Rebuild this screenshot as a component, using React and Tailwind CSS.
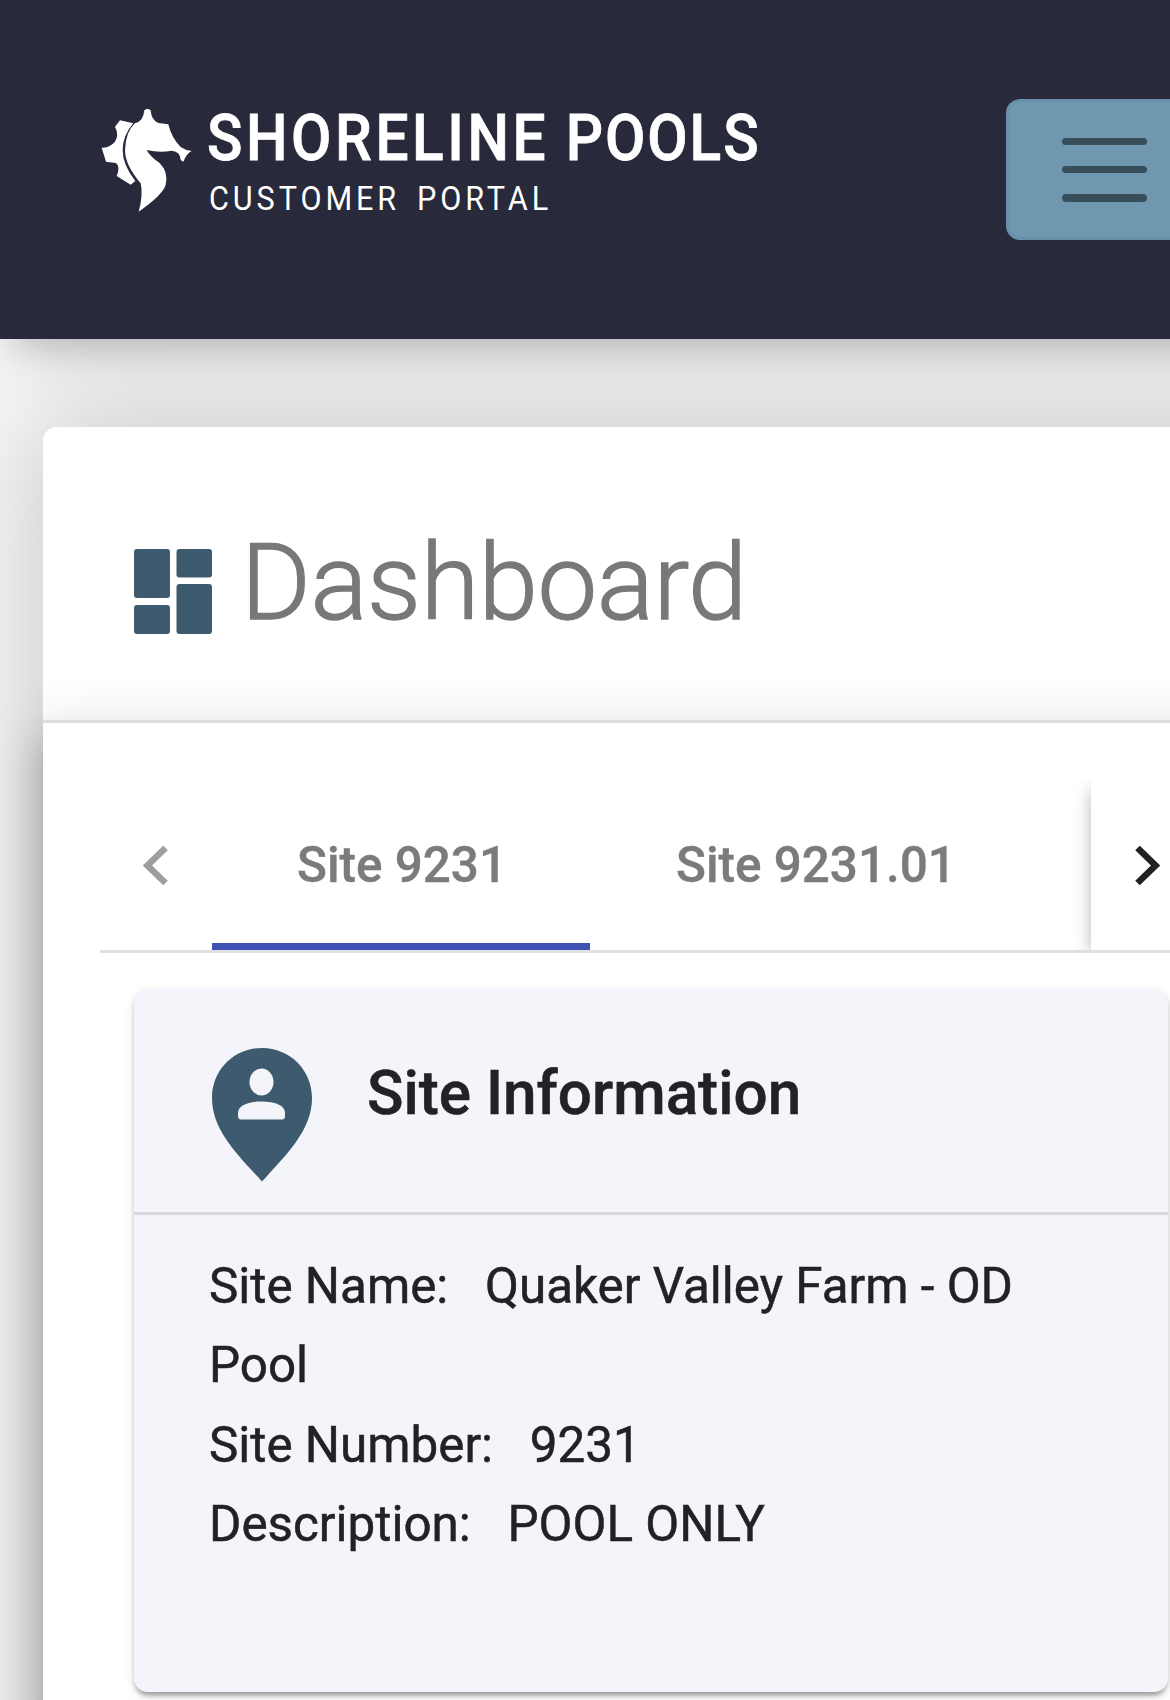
import React from "react";

function Seahorse() {
  return (
    <svg viewBox="0 0 360 390" className="h-[130px] w-[120px] shrink-0" fill="#fff">
      <path d="M130 85L90 76L75 95Q88 120 75 140Q60 158 35 158L48 200L78 204Q92 215 80 243L122 269L136 258Q98 210 98 165Q99 120 130 85Z" />
      <path d="M163 46Q172 38 182 46Q184 76 205 84L235 88Q245 130 272 156Q286 166 305 168Q290 175 280 200L272 195Q272 170 245 167Q210 174 170 165Q180 185 208 203Q236 230 227 270Q218 300 146 350Q160 300 152 265Q105 210 105 165Q107 110 135 85Q160 80 163 46Z" />
    </svg>
  );
}

export default function App() {
  return (
    <div className="h-[1700px] w-[1170px] overflow-hidden bg-[#f5f5f5] font-['Roboto',sans-serif]">
      <header className="flex h-[339px] w-[1300px] bg-[#28293b] shadow-[0_22px_32px_-14px_rgba(0,0,0,0.18),0_40px_70px_-20px_rgba(0,0,0,0.1)]">
        <div className="flex w-[1006px] shrink-0 pt-[95px] pl-[90px]">
          <Seahorse />
          <div className="-ml-[3.5px] flex flex-col pt-[13px] whitespace-nowrap text-white">
            <span className="h-[70px] origin-left scale-x-90 text-[65px] leading-[60px] font-medium tracking-[4px] [-webkit-text-stroke:0.800px_#fff]">
              SHORELINE<span className="tracking-[2.200px]"> POOLS</span>
            </span>
            <span className="ml-[2px] origin-left scale-x-90 text-[34px] leading-[40px] tracking-[4.350px] [word-spacing:6px]">CUSTOMER PORTAL</span>
          </div>
        </div>
        <button className="mt-[99px] flex h-[141px] w-[220px] shrink-0 flex-col gap-[20.800px] rounded-[14px] border-[3px] border-[#6990a9] bg-[#6f97b0] pt-[35.500px] pl-[53px]">
          <span className="h-[7.5px] w-[85px] rounded-full bg-[#384f5a]" />
          <span className="h-[7.5px] w-[85px] rounded-full bg-[#384f5a]" />
          <span className="h-[7.5px] w-[85px] rounded-full bg-[#384f5a]" />
        </button>
      </header>

      <main className="mt-[88px] ml-[43px] w-[1300px] rounded-tl-[14px] bg-white shadow-[0_0_110px_rgba(0,0,0,0.2)]">
        <div className="flex h-[293px] items-start pl-[91px]">
          <svg viewBox="0 0 78 85" className="mt-[122px] h-[85px] w-[78px]" fill="#3d5a6e">
            <rect width="36" height="49" rx="3" />
            <rect y="56" width="36" height="29" rx="3" />
            <rect x="42.500" width="35.500" height="28.500" rx="3" />
            <rect x="42.500" y="35" width="35.500" height="50" rx="3" />
          </svg>
          <h1 className="mt-[96px] ml-[29px] text-[106.5px] leading-[120px] font-light tracking-[-0.400px] text-[#787878] [-webkit-text-stroke:1.4px_#787878]">Dashboard</h1>
        </div>

        <section className="h-[1100px] border-t-[3px] border-[#dedede] bg-white pt-[58px] pl-[57px] shadow-[0_18px_18px_-11px_rgba(0,0,0,0.2),0_28px_35px_4px_rgba(0,0,0,0.14),0_11px_49px_7px_rgba(0,0,0,0.12)]">
          <nav className="flex h-[172px] overflow-hidden border-b-[3px] border-[#e0e0e0] text-[49.4px] font-medium text-[#7b7b7b] [-webkit-text-stroke:0.400px_#7b7b7b]">
            <div className="flex w-[112px] shrink-0 items-center pl-[43px]">
              <svg viewBox="0 0 25 40" className="h-[40px] w-[25px]" fill="none" stroke="#9e9e9e" strokeWidth="6.500">
                <path d="M22.500 2L4.500 19.500L22.500 37" />
              </svg>
            </div>
            <div className="flex w-[878.500px] shrink-0 overflow-hidden">
              <div className="flex w-[378px] shrink-0 items-center border-b-[7px] border-[#3f51b5] pt-[7px] pl-[85px]">Site 9231</div>
              <div className="flex items-center pl-[86px]">Site 9231.01</div>
            </div>
            <div className="flex grow items-center bg-white pl-[44px] shadow-[0_7px_18px_-3px_rgba(0,0,0,0.4)]">
              <svg viewBox="0 0 25 40" className="h-[40px] w-[25px]" fill="none" stroke="#212121" strokeWidth="6.500">
                <path d="M2.500 2L20.500 19.500L2.500 37" />
              </svg>
            </div>
          </nav>

          <article className="mt-[36px] ml-[34px] h-[703px] w-[1034px] rounded-[14px] bg-[#f4f5fa] text-[#212225] shadow-[0_7px_4px_-4px_rgba(0,0,0,0.2),0_4px_4px_0_rgba(0,0,0,0.14),0_4px_11px_0_rgba(0,0,0,0.12)] [-webkit-text-stroke:0.500px_#212225]">
            <div className="flex h-[226px] items-start border-b-[3px] border-[#d8d9de] pl-[77px]">
              <svg viewBox="0 0 102 134" className="mt-[58.500px] h-[134px] w-[102px]">
                <path fill="#3d5a6e" d="M51 0C79 0 101 22 101 50C101 82 76 106 51 133.500C26 106 1 82 1 50C1 22 23 0 51 0Z" />
                <ellipse cx="50.500" cy="34" rx="12" ry="13.500" fill="#f4f5fa" />
                <path fill="#f4f5fa" d="M27 68V65C27 57 38 53.500 50.500 53.500S74 57 74 65V68Q74 71.500 71 71.500H30Q27 71.500 27 68Z" />
              </svg>
              <h2 className="mt-[65px] ml-[54px] text-[60.2px] leading-[80px] font-medium">Site Information</h2>
            </div>
            <div className="w-[980px] pt-[32px] pl-[75px] text-[49.35px] leading-[79.400px]">
              <p>Site Name: &nbsp; Quaker Valley Farm - OD<br />Pool</p>
              <p>Site Number: &nbsp; 9231</p>
              <p>Description: &nbsp; POOL ONLY</p>
            </div>
          </article>
        </section>
      </main>
    </div>
  );
}
